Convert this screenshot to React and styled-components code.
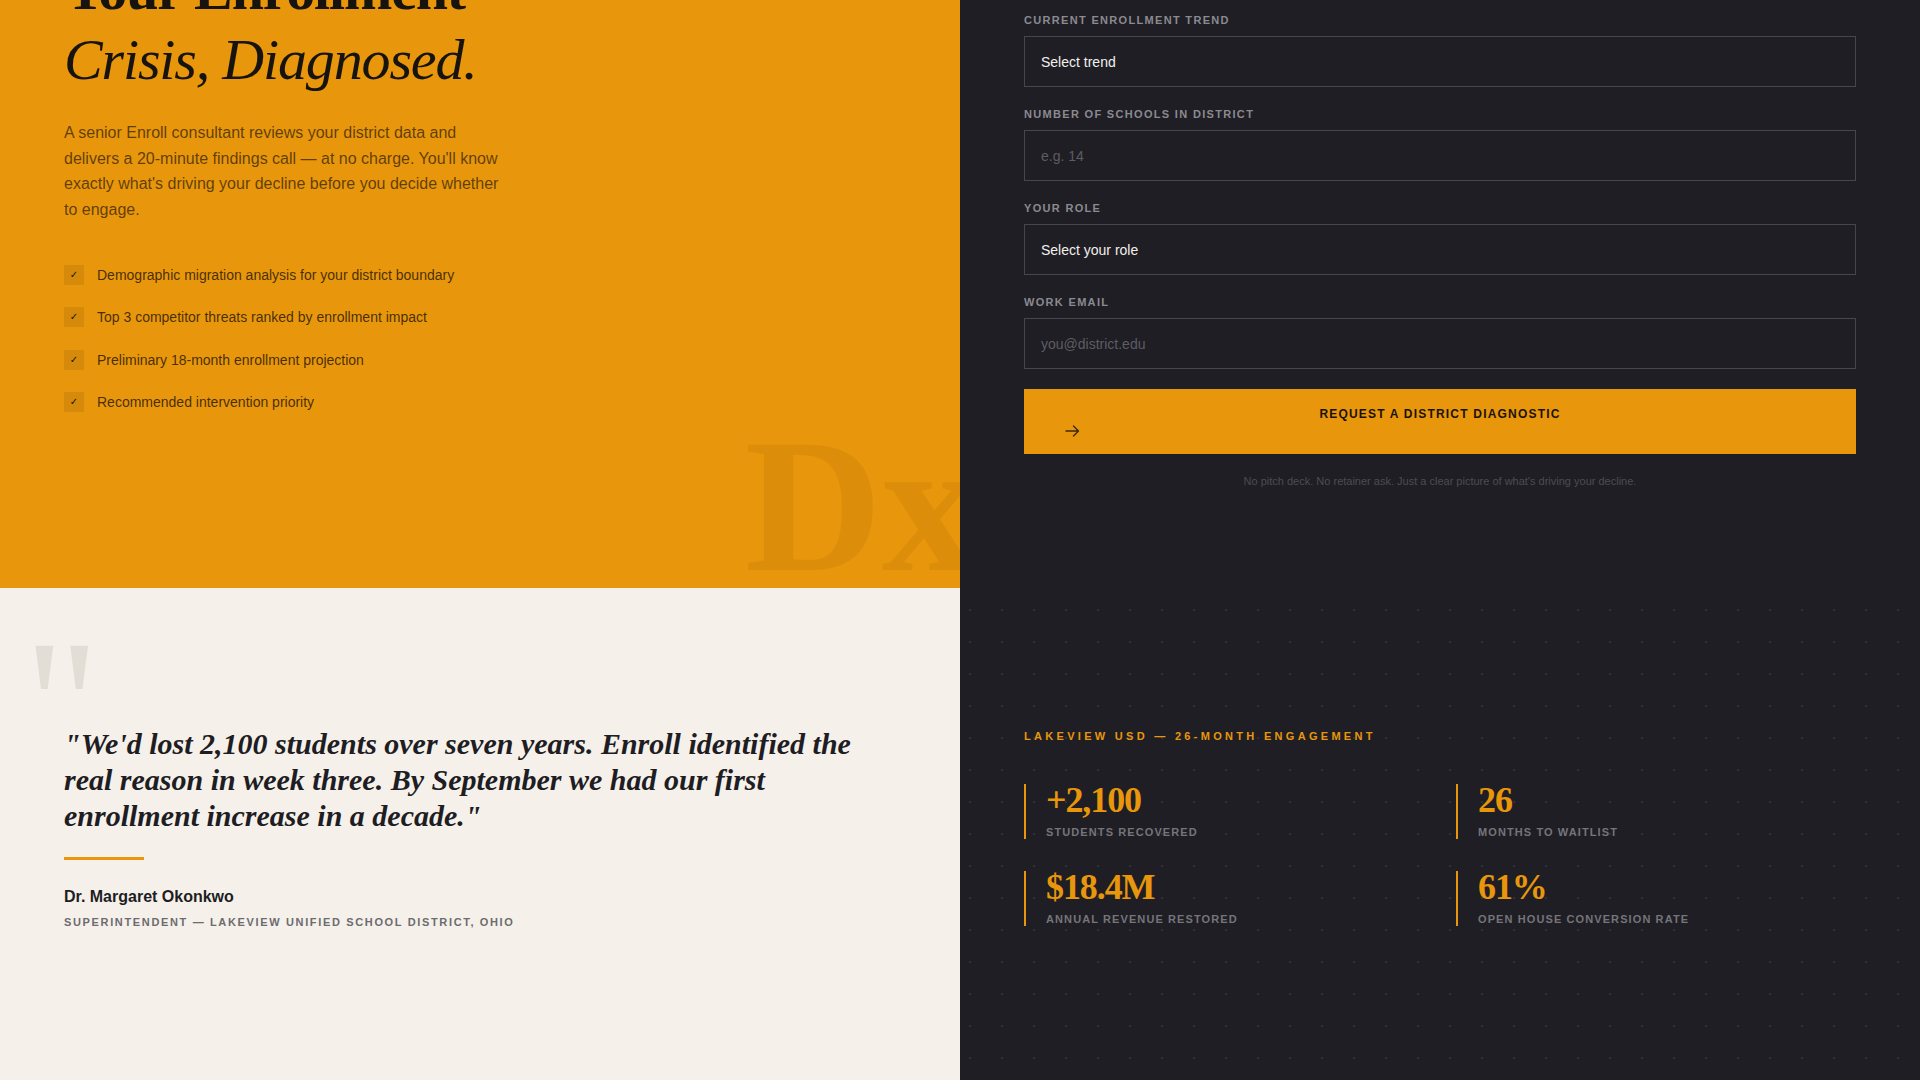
import React from 'react'
import styled, { createGlobalStyle } from 'styled-components'

const GlobalStyle = createGlobalStyle`
  * { box-sizing: border-box; }
  html, body { margin: 0; padding: 0; }
  body {
    background: #1f1e24;
    font-family: "Liberation Sans", Arial, sans-serif;
    -webkit-font-smoothing: antialiased;
  }
`

const checklist = [
  'Demographic migration analysis for your district boundary',
  'Top 3 competitor threats ranked by enrollment impact',
  'Preliminary 18-month enrollment projection',
  'Recommended intervention priority',
]

const stats = [
  { value: '+2,100', label: 'Students recovered' },
  { value: '26', label: 'Months to waitlist' },
  { value: '$18.4M', label: 'Annual revenue restored' },
  { value: '61%', label: 'Open house conversion rate' },
]

function App() {
  return (
    <Page>
      <GlobalStyle />
      <HeroRow>
        <OfferPanel>
          <Heading>
            Your Enrollment
            <br />
            <em>Crisis, Diagnosed.</em>
          </Heading>
          <Lead>
            A senior Enroll consultant reviews your district data and delivers a 20-minute
            findings call — at no charge. You'll know exactly what's driving your decline
            before you decide whether to engage.
          </Lead>
          <CheckList>
            {checklist.map(item => (
              <CheckItem key={item}>
                <CheckBox>✓</CheckBox>
                {item}
              </CheckItem>
            ))}
          </CheckList>
          <Watermark>Dx</Watermark>
        </OfferPanel>

        <FormPanel>
          <Field>
            <Label>Current enrollment trend</Label>
            <Select defaultValue="">
              <option value="">Select trend</option>
            </Select>
          </Field>
          <Field>
            <Label>Number of schools in district</Label>
            <TextInput type="text" placeholder="e.g. 14" />
          </Field>
          <Field>
            <Label>Your role</Label>
            <Select defaultValue="">
              <option value="">Select your role</option>
            </Select>
          </Field>
          <Field>
            <Label>Work email</Label>
            <TextInput type="email" placeholder="you@district.edu" />
          </Field>
          <SubmitButton type="button">
            <span>Request a District Diagnostic</span>
            <Arrow width="15" height="12" viewBox="0 0 15 12">
              <path d="M1 6h12.5M8.5 1l5 5-5 5" />
            </Arrow>
          </SubmitButton>
          <FinePrint>
            No pitch deck. No retainer ask. Just a clear picture of what's driving your decline.
          </FinePrint>
        </FormPanel>
      </HeroRow>

      <ProofRow>
        <Testimonial>
          <QuoteMark>"</QuoteMark>
          <Quote>
            "We'd lost 2,100 students over seven years. Enroll identified the real reason in
            week three. By September we had our first enrollment increase in a decade."
          </Quote>
          <Rule />
          <Author>Dr. Margaret Okonkwo</Author>
          <AuthorTitle>Superintendent — Lakeview Unified School District, Ohio</AuthorTitle>
        </Testimonial>

        <Results>
          <Eyebrow>Lakeview USD — 26-Month Engagement</Eyebrow>
          <StatGrid>
            {stats.map(s => (
              <Stat key={s.label}>
                <StatValue>{s.value}</StatValue>
                <StatLabel>{s.label}</StatLabel>
              </Stat>
            ))}
          </StatGrid>
        </Results>
      </ProofRow>
    </Page>
  )
}

export default App

const Page = styled.div`
  width: 100%;
  height: 1080px;
  overflow: hidden;
`

const HeroRow = styled.section`
  display: grid;
  grid-template-columns: 1fr 1fr;
  height: 588px;
`

const OfferPanel = styled.div`
  position: relative;
  overflow: hidden;
  background: #e8960c;
  padding: 0 64px;
  display: flex;
  flex-direction: column;
`

const Heading = styled.h1`
  margin: -45px 0 0;
  font-family: "Liberation Serif", "Times New Roman", serif;
  font-size: 58px;
  line-height: 1.2;
  font-weight: 700;
  letter-spacing: -0.02em;
  color: #17140f;

  em {
    font-weight: 400;
    font-style: italic;
  }
`

const Lead = styled.p`
  margin: 26px 0 0;
  max-width: 440px;
  font-size: 16px;
  line-height: 1.6;
  color: rgba(26, 18, 4, 0.68);
`

const CheckList = styled.ul`
  list-style: none;
  margin: 42px 0 0;
  padding: 0;
  display: flex;
  flex-direction: column;
  gap: 22.5px;
`

const CheckItem = styled.li`
  display: flex;
  align-items: center;
  gap: 13px;
  font-size: 14px;
  line-height: 20px;
  color: rgba(26, 18, 4, 0.8);
`

const CheckBox = styled.span`
  width: 20px;
  height: 20px;
  flex: none;
  display: flex;
  align-items: center;
  justify-content: center;
  background: rgba(0, 0, 0, 0.08);
  font-family: "DejaVu Sans", sans-serif;
  font-size: 10px;
  font-weight: 700;
  color: #1a1204;
`

const Watermark = styled.span`
  position: absolute;
  right: -17px;
  bottom: -13px;
  font-family: "Liberation Serif", "Times New Roman", serif;
  font-weight: 700;
  font-size: 190px;
  line-height: 1;
  color: rgba(90, 50, 0, 0.08);
  pointer-events: none;
  user-select: none;
`

const FormPanel = styled.form`
  background: #1f1e24;
  padding: 13px 64px 0;
  display: flex;
  flex-direction: column;
`

const Field = styled.div`
  display: flex;
  flex-direction: column;
  margin-bottom: 20px;
`

const Label = styled.label`
  font-size: 11px;
  line-height: 14px;
  font-weight: 700;
  letter-spacing: 0.12em;
  text-transform: uppercase;
  color: #8b8a90;
  margin-bottom: 9px;
`

const controlStyles = `
  height: 51px;
  width: 100%;
  padding: 0 16px;
  background: #1f1e24;
  border: 1px solid rgba(255, 255, 255, 0.18);
  border-radius: 0;
  font-family: "Liberation Sans", Arial, sans-serif;
  font-size: 14px;
  color: #f2f0ec;
  outline: none;
`

const Select = styled.select`
  ${controlStyles}
  appearance: none;
  -webkit-appearance: none;
`

const TextInput = styled.input`
  ${controlStyles}

  &::placeholder {
    color: #5d5c63;
  }
`

const SubmitButton = styled.button`
  display: flex;
  flex-direction: column;
  align-items: center;
  width: 100%;
  padding: 17px 40px 14px;
  border: none;
  background: #e8960c;
  cursor: pointer;
  font-family: "Liberation Sans", Arial, sans-serif;
  font-size: 12px;
  line-height: 16px;
  font-weight: 700;
  letter-spacing: 0.1em;
  text-transform: uppercase;
  color: #1a1206;
`

const Arrow = styled.svg`
  align-self: flex-start;
  margin: 3px 0 3px 1px;
  fill: none;
  stroke: #3b2705;
  stroke-width: 1.3;
  stroke-linecap: round;
  stroke-linejoin: round;
`

const FinePrint = styled.p`
  margin: 21px 0 0;
  text-align: center;
  font-size: 11px;
  line-height: 13px;
  color: #4d4c54;
`

const ProofRow = styled.section`
  display: grid;
  grid-template-columns: 1fr 1fr;
  height: 492px;
`

const Testimonial = styled.figure`
  position: relative;
  margin: 0;
  background: #f5f1ea;
  padding: 138px 64px 0;
`

const QuoteMark = styled.span`
  position: absolute;
  top: 24px;
  left: 24px;
  font-family: "Liberation Serif", "Times New Roman", serif;
  font-size: 185px;
  line-height: 1;
  color: rgba(40, 30, 10, 0.09);
  user-select: none;
`

const Quote = styled.blockquote`
  position: relative;
  margin: 0;
  max-width: 820px;
  font-family: "Liberation Serif", "Times New Roman", serif;
  font-style: italic;
  font-weight: 700;
  font-size: 30px;
  line-height: 36px;
  color: #1f1d24;
`

const Rule = styled.div`
  width: 80px;
  height: 3px;
  margin: 23px 0 27px;
  background: #e8960c;
`

const Author = styled.div`
  font-size: 16px;
  line-height: 20px;
  font-weight: 700;
  color: #1f1d24;
`

const AuthorTitle = styled.div`
  margin-top: 8px;
  font-size: 11px;
  line-height: 14px;
  font-weight: 700;
  letter-spacing: 0.15em;
  text-transform: uppercase;
  color: #6c6b70;
`

const Results = styled.div`
  background-color: #1f1e24;
  background-image: radial-gradient(circle, rgba(255, 255, 255, 0.08) 1px, transparent 1.6px);
  background-size: 32px 32px;
  background-position: -6px 6px;
  padding: 141px 64px 0;
`

const Eyebrow = styled.div`
  font-size: 11px;
  line-height: 14px;
  font-weight: 700;
  letter-spacing: 0.3em;
  text-transform: uppercase;
  color: #e8960c;
  margin-bottom: 41px;
`

const StatGrid = styled.div`
  display: grid;
  grid-template-columns: 1fr 1fr;
  gap: 32px;
`

const Stat = styled.div`
  border-left: 2px solid #e8960c;
  padding-left: 20px;
`

const StatValue = styled.div`
  font-family: "Liberation Serif", "Times New Roman", serif;
  font-weight: 700;
  font-size: 36px;
  line-height: 28px;
  padding-top: 2px;
  letter-spacing: -0.03em;
  color: #e8960c;
`

const StatLabel = styled.div`
  margin-top: 11px;
  font-size: 11px;
  line-height: 14px;
  font-weight: 700;
  letter-spacing: 0.1em;
  text-transform: uppercase;
  color: #75747a;
`
